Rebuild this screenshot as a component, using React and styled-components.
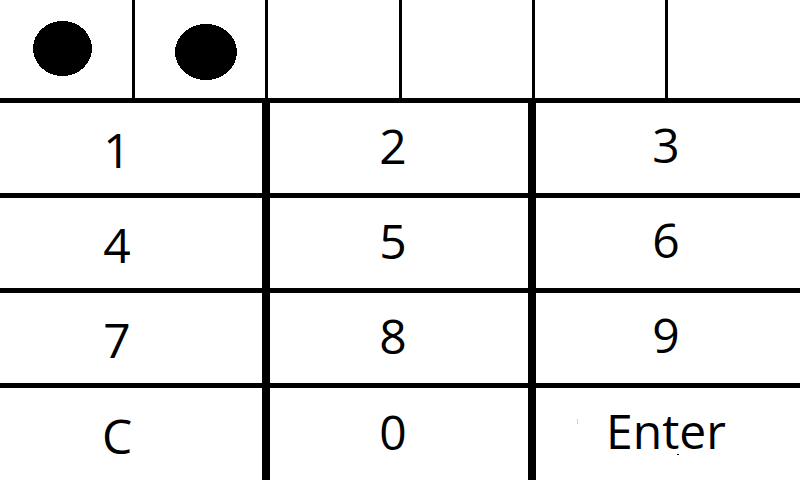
import React, { useState } from "react";
import styled, { createGlobalStyle } from "styled-components";

const GlobalStyle = createGlobalStyle`
  *, *::before, *::after { box-sizing: border-box; }
  body { margin: 0; background: #fff; color: #000; }
`;

const Page = styled.main`
  display: flex;
  flex-direction: column;
  min-height: 100vh;
  font-family: "Open Sans", "Noto Sans", sans-serif;
`;

const CodeDisplay = styled.div`
  display: grid;
  grid-template-columns: 132fr 133fr 134fr 133fr 133fr 135fr;
  height: 98px;
`;

const Slot = styled.div`
  min-width: 0;
  & + & { border-left: 3px solid #000; }
`;

const Mark = styled.svg`
  display: block;
  width: 100%;
  height: 100%;
`;

const Keypad = styled.div`
  flex: 1;
  display: grid;
  grid-template-columns: 262fr 266fr 272fr;
  grid-template-rows: 95fr 95fr 95fr 97fr;
`;

const columnPadding = ["4px 28px 0 0", "0 12px 4px 0", "0 4px 6px 0"];

const Key = styled.button`
  position: relative;
  display: flex;
  align-items: center;
  justify-content: center;
  min-width: 0;
  margin: 0;
  padding: ${({ $column }) => columnPadding[$column]};
  border: 0 solid #000;
  border-top-width: 5px;
  border-left-width: ${({ $column }) => ($column === 0 ? "0" : "8px")};
  border-radius: 0;
  background: #fff;
  color: #000;
  font: inherit;
  font-size: 48px;
  line-height: 64px;
  cursor: pointer;
`;

const Specks = styled.svg`
  position: absolute;
  inset: 0;
  width: 100%;
  height: 100%;
`;

const KEYS = ["1", "2", "3", "4", "5", "6", "7", "8", "9", "C", "0", "Enter"];

const DOTS = [
  { width: 132, cx: 62.5, cy: 48.5, rx: 29.5, ry: 27.5 },
  { width: 130, cx: 71, cy: 52, rx: 31, ry: 28 },
  { width: 131, cx: 65, cy: 50, rx: 30, ry: 28 },
  { width: 130, cx: 65, cy: 50, rx: 30, ry: 28 },
  { width: 130, cx: 65, cy: 50, rx: 30, ry: 28 },
  { width: 132, cx: 65, cy: 50, rx: 30, ry: 28 },
];

export default function App() {
  const [code, setCode] = useState("12");

  const press = (key) => {
    if (key === "C") setCode("");
    else if (key !== "Enter") setCode((c) => (c + key).slice(0, DOTS.length));
  };

  return (
    <Page>
      <GlobalStyle />
      <CodeDisplay role="status" aria-label={`${code.length} digits entered`}>
        {DOTS.map(({ width, ...dot }, i) => (
          <Slot key={i}>
            {i < code.length && (
              <Mark viewBox={`0 0 ${width} 98`} aria-hidden="true">
                <ellipse {...dot} shapeRendering="crispEdges" />
              </Mark>
            )}
          </Slot>
        ))}
      </CodeDisplay>
      <Keypad>
        {KEYS.map((key, i) => (
          <Key key={key} type="button" $column={i % 3} onClick={() => press(key)}>
            {key}
            {key === "Enter" && (
              <Specks viewBox="0 0 264 92" aria-hidden="true">
                <rect x="41" y="31" width="1" height="5" fill="#ffc98a" />
                <rect x="141" y="66" width="2" height="1" />
              </Specks>
            )}
          </Key>
        ))}
      </Keypad>
    </Page>
  );
}
